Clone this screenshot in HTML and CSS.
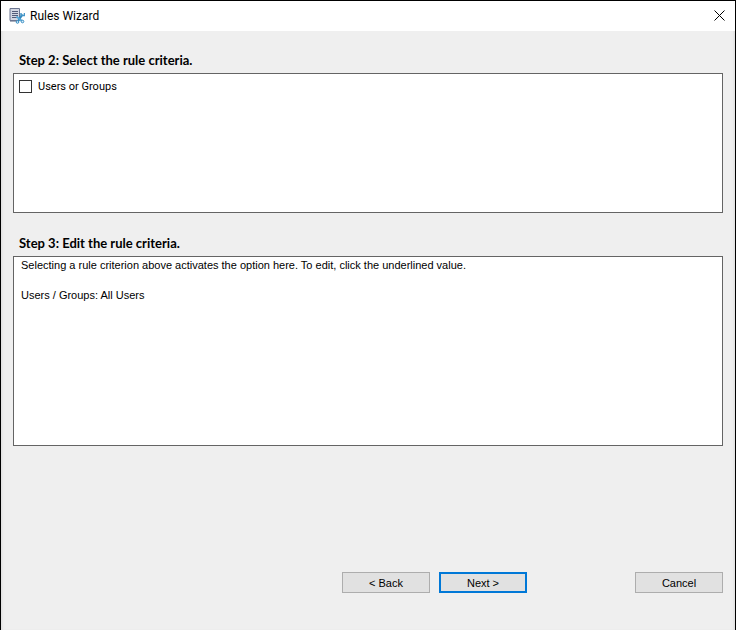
FILE: index.html
```html
<!DOCTYPE html>
<html lang="en">
<head>
    <meta charset="utf-8">
    <title>Rules Wizard</title>
    <link rel="stylesheet" href="styles.css">
</head>
<body>
    <div class="window">
        <header class="title-bar">
            <svg class="app-icon" width="16" height="16" viewBox="0 0 16 16" aria-hidden="true">
                <path d="M1 .500h9.500v12H1z" fill="#d3d7e2" stroke="#6b7590"/>
                <path d="M3 3.500h6M3 5.500h6M3 7.500h6M3 9.500h5" stroke="#535c78"/>
                <path d="M1 13.500h6" stroke="#a9afbd"/>
                <path d="M13.500 6.500L8.500 14" stroke="#2f86bd" stroke-width="2"/>
                <path d="M7.500 8.500l6 5" stroke="#55a7d6" stroke-width="2"/>
                <path d="M12 5v2.500h3.500V5" fill="none" stroke="#4596c8" stroke-width="1.500"/>
                <circle cx="8.500" cy="14" r="1.300" fill="#d9eefa" stroke="#3b8fc4"/>
                <circle cx="13.500" cy="13.500" r="1.300" fill="#d9eefa" stroke="#3b8fc4"/>
            </svg>
            <h1>Rules Wizard</h1>
            <button type="button" class="close-button" aria-label="Close">
                <svg width="11" height="11" viewBox="0 0 11 11" aria-hidden="true">
                    <path d="M.5.5l10 10M10.500.5l-10 10" stroke="#000" fill="none"/>
                </svg>
            </button>
        </header>

        <main class="content">
            <section>
                <h2>Step 2: Select the rule criteria.</h2>
                <div class="panel criteria-list">
                    <label class="criterion">
                        <input type="checkbox">
                        Users or Groups
                    </label>
                </div>
            </section>

            <section>
                <h2>Step 3: Edit the rule criteria.</h2>
                <div class="panel criteria-editor">
                    <p>Selecting a rule criterion above activates the option here. To edit, click the underlined value.</p>
                    <p>Users / Groups: All Users</p>
                </div>
            </section>
        </main>

        <footer class="actions">
            <button type="button" class="button">&lt; Back</button>
            <button type="button" class="button button-default">Next &gt;</button>
            <button type="button" class="button button-cancel">Cancel</button>
        </footer>
    </div>
</body>
</html>
```
FILE: styles.css
```css
* {
    box-sizing: border-box;
}

body {
    margin: 0;
    font-family: "Liberation Sans", Arial, sans-serif;
    font-size: 11px;
    color: #000;
    background-color: #efefef;
}

.window {
    display: flex;
    flex-direction: column;
    min-height: 100vh;
    border: 1px solid #000;
    border-bottom: none;
    box-shadow: inset 3px 0 3px -2px #ddd, inset -3px 0 3px -2px #ddd;
}

.title-bar {
    display: flex;
    align-items: center;
    height: 30px;
    padding: 0 10px 1px 8px;
    background-color: #fff;
}

.title-bar h1 {
    flex: 1;
    margin: 0 0 0 5px;
    font-family: Roboto, "Segoe UI", sans-serif;
    font-size: 12px;
    font-weight: 400;
    line-height: 16px;
}

.close-button {
    display: flex;
    padding: 0;
    border: none;
    background: none;
}

.content {
    padding: 20px 12px 0;
}

h2 {
    margin: 0 0 4px 6px;
    font-family: Lato, "Segoe UI", sans-serif;
    font-size: 13px;
    font-weight: 700;
    line-height: 18px;
}

.panel {
    border: 1px solid #646464;
    background-color: #fff;
}

.criteria-list {
    height: 140px;
    margin-bottom: 21px;
    padding: 6px 5px;
}

.criterion {
    display: flex;
    align-items: center;
    gap: 6px;
    font-family: Roboto, sans-serif;
    line-height: 13px;
}

.criterion input {
    appearance: none;
    width: 13px;
    height: 13px;
    margin: 0;
    border: 1px solid #333;
    background-color: #fff;
}

.criterion input:checked {
    background-color: #0078d7;
}

.criteria-editor {
    height: 190px;
    padding: 1px 7px;
}

.criteria-editor p {
    margin: 0 0 15px;
    line-height: 15px;
}

.actions {
    display: flex;
    gap: 9px;
    margin-top: auto;
    padding: 0 12px 37px;
    justify-content: flex-end;
}

.button {
    width: 88px;
    height: 21px;
    padding: 0;
    border: 1px solid #adadad;
    background-color: #e1e1e1;
    color: #000;
    font: inherit;
}

.button-default {
    border: 2px solid #0078d7;
}

.button-cancel {
    margin-left: 99px;
}
```
